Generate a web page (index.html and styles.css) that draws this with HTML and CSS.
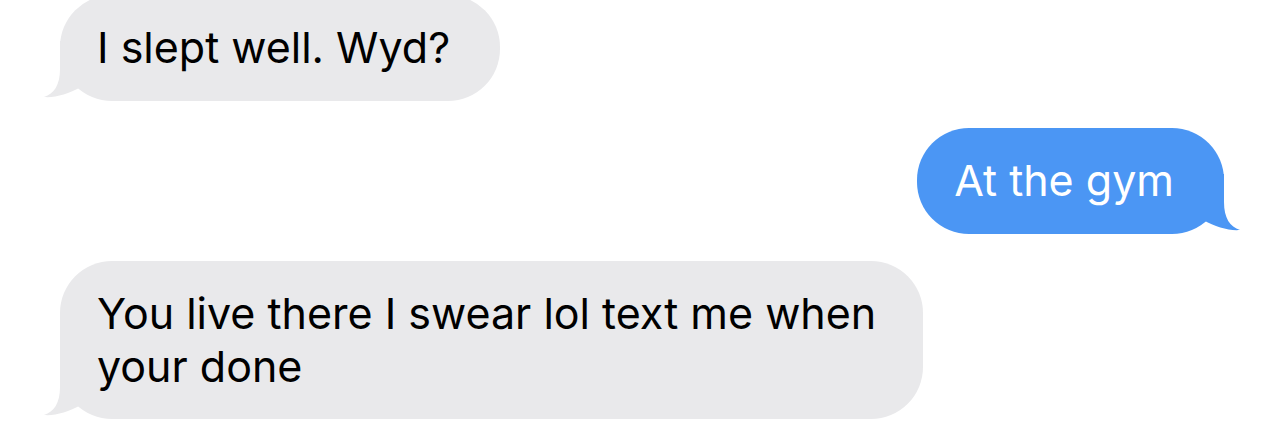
FILE: index.html
```html
<!DOCTYPE html>
<html lang="en">
<head>
<meta charset="utf-8">
<title>Messages</title>
<link rel="stylesheet" href="styles.css">
</head>
<body>
  <main class="thread">
    <div class="row row-in row-first">
      <div class="bubble bubble-in">
        I slept well. Wyd?
        <svg class="tail tail-in" width="40" height="60" viewBox="-20 -56 40 60" aria-hidden="true">
          <path d="M0,-56 L0,-28 C0,-12 -6,-3 -16,0 C-5,1 8,-3 21,-10 L21,-56 Z"/>
        </svg>
      </div>
    </div>
    <div class="row row-out">
      <div class="bubble bubble-out">
        At the gym
        <svg class="tail tail-out" width="40" height="60" viewBox="-20 -56 40 60" aria-hidden="true">
          <path d="M0,-56 L0,-28 C0,-12 -6,-3 -16,0 C-5,1 8,-3 21,-10 L21,-56 Z"/>
        </svg>
      </div>
    </div>
    <div class="row row-in">
      <div class="bubble bubble-in bubble-wide">
        You live there I swear lol text me when your done
        <svg class="tail tail-in" width="40" height="60" viewBox="-20 -56 40 60" aria-hidden="true">
          <path d="M0,-56 L0,-28 C0,-12 -6,-3 -16,0 C-5,1 8,-3 21,-10 L21,-56 Z"/>
        </svg>
      </div>
    </div>
  </main>
</body>
</html>
```

FILE: styles.css
```css
html, body {
  margin: 0;
  padding: 0;
  background: #ffffff;
}

body {
  font-family: "Inter", "Liberation Sans", sans-serif;
  -webkit-font-smoothing: antialiased;
}

.thread {
  display: flex;
  flex-direction: column;
  gap: 27px;
  padding: 0 60px;
  overflow: hidden;
  height: 427px;
  box-sizing: border-box;
}

.row {
  display: flex;
}

.row-in {
  justify-content: flex-start;
}

.row-out {
  justify-content: flex-end;
}

.row-first {
  margin-top: -5px;
}

.bubble {
  position: relative;
  font-size: 43px;
  line-height: 53px;
  padding: 26px 50px 27px 37px;
  border-radius: 52px;
}

.bubble-in {
  background: #e9e9eb;
  color: #000000;
}

.bubble-out {
  background: #4b96f4;
  color: #ffffff;
}

.bubble-wide {
  width: 863px;
  padding-right: 30px;
  padding-bottom: 26px;
  box-sizing: border-box;
}

/* speech tails hang off the bottom corner on the sender's side */
.tail {
  position: absolute;
  bottom: 0;
  overflow: visible;
}

.tail-in {
  left: -20px;
}

.tail-in path {
  fill: #e9e9eb;
}

.tail-out {
  right: -20px;
  transform: scaleX(-1);
}

.tail-out path {
  fill: #4b96f4;
}
```
